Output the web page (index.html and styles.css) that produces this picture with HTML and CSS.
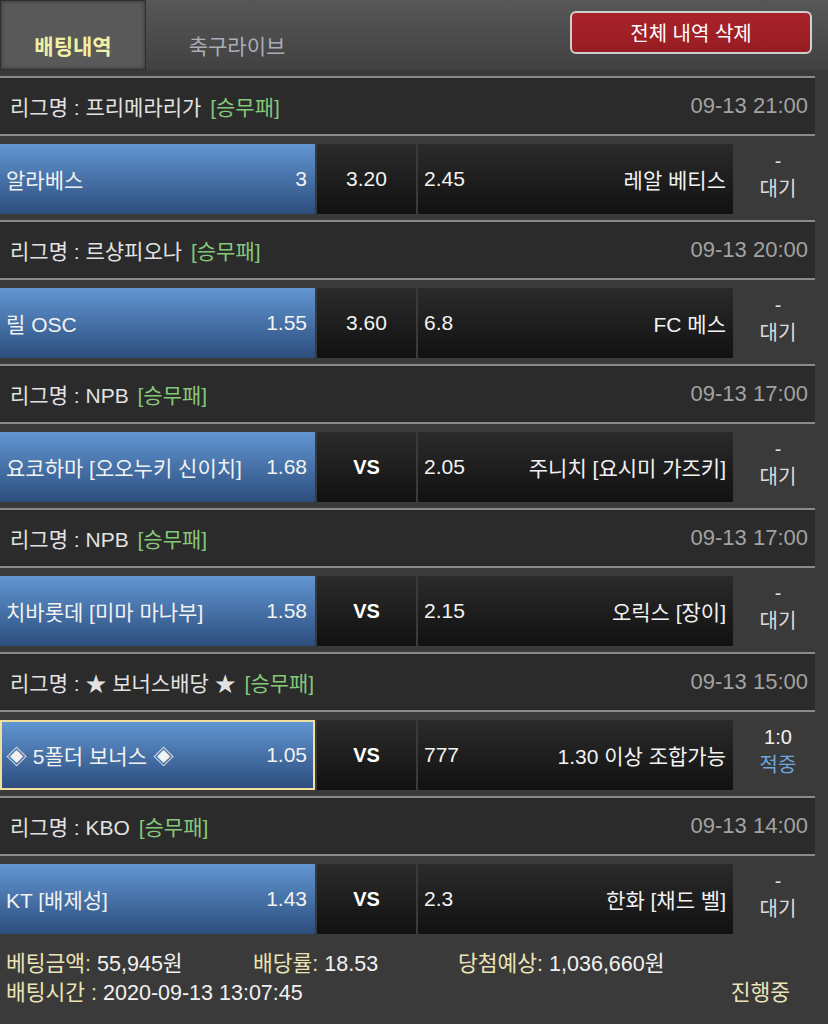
FILE: index.html
```html
<!DOCTYPE html>
<html lang="ko">
<head>
  <meta charset="UTF-8">
  <meta name="viewport" content="width=device-width, initial-scale=1.0">
  <title>배팅내역</title>
  <link rel="stylesheet" href="styles.css">
</head>
<body>
  <div class="top-bar">
    <div class="tab active">배팅내역</div>
    <div class="tab">축구라이브</div>
    <button class="btn-clear">전체 내역 삭제</button>
  </div>

  <div class="bet-list">
    <div class="bet-block">
      <div class="league">
        <span class="league-name">리그명 : 프리메라리가 <em>[승무패]</em></span>
        <span class="league-date">09-13 21:00</span>
      </div>
      <div class="match">
        <div class="cell home"><span>알라베스</span><span>3</span></div>
        <div class="cell draw">3.20</div>
        <div class="cell away"><span>2.45</span><span>레알 베티스</span></div>
        <div class="status"><span>-</span><span>대기</span></div>
      </div>
    </div>

    <div class="bet-block">
      <div class="league">
        <span class="league-name">리그명 : 르샹피오나 <em>[승무패]</em></span>
        <span class="league-date">09-13 20:00</span>
      </div>
      <div class="match">
        <div class="cell home"><span>릴 OSC</span><span>1.55</span></div>
        <div class="cell draw">3.60</div>
        <div class="cell away"><span>6.8</span><span>FC 메스</span></div>
        <div class="status"><span>-</span><span>대기</span></div>
      </div>
    </div>

    <div class="bet-block">
      <div class="league">
        <span class="league-name">리그명 : NPB <em>[승무패]</em></span>
        <span class="league-date">09-13 17:00</span>
      </div>
      <div class="match">
        <div class="cell home"><span>요코하마 [오오누키 신이치]</span><span>1.68</span></div>
        <div class="cell draw vs">VS</div>
        <div class="cell away"><span>2.05</span><span>주니치 [요시미 가즈키]</span></div>
        <div class="status"><span>-</span><span>대기</span></div>
      </div>
    </div>

    <div class="bet-block">
      <div class="league">
        <span class="league-name">리그명 : NPB <em>[승무패]</em></span>
        <span class="league-date">09-13 17:00</span>
      </div>
      <div class="match">
        <div class="cell home"><span>치바롯데 [미마 마나부]</span><span>1.58</span></div>
        <div class="cell draw vs">VS</div>
        <div class="cell away"><span>2.15</span><span>오릭스 [장이]</span></div>
        <div class="status"><span>-</span><span>대기</span></div>
      </div>
    </div>

    <div class="bet-block">
      <div class="league">
        <span class="league-name">리그명 : ★ 보너스배당 ★ <em>[승무패]</em></span>
        <span class="league-date">09-13 15:00</span>
      </div>
      <div class="match">
        <div class="cell home picked"><span>◈ 5폴더 보너스 ◈</span><span>1.05</span></div>
        <div class="cell draw vs">VS</div>
        <div class="cell away"><span>777</span><span>1.30 이상 조합가능</span></div>
        <div class="status"><span class="score">1:0</span><span class="hit">적중</span></div>
      </div>
    </div>

    <div class="bet-block">
      <div class="league">
        <span class="league-name">리그명 : KBO <em>[승무패]</em></span>
        <span class="league-date">09-13 14:00</span>
      </div>
      <div class="match">
        <div class="cell home"><span>KT [배제성]</span><span>1.43</span></div>
        <div class="cell draw vs">VS</div>
        <div class="cell away"><span>2.3</span><span>한화 [채드 벨]</span></div>
        <div class="status"><span>-</span><span>대기</span></div>
      </div>
    </div>
  </div>

  <div class="summary">
    <div class="summary-row">
      <span class="item w1"><b>베팅금액:</b> 55,945원</span>
      <span class="item w2"><b>배당률:</b> 18.53</span>
      <span class="item"><b>당첨예상:</b> 1,036,660원</span>
    </div>
    <div class="summary-row spread">
      <span class="item"><b>배팅시간 :</b> 2020-09-13 13:07:45</span>
      <span class="item state">진행중</span>
    </div>
  </div>
</body>
</html>
```

FILE: styles.css
```css
* {
  box-sizing: border-box;
  margin: 0;
  padding: 0;
}

body {
  font-family: "Liberation Sans", "Noto Sans CJK KR", sans-serif;
  background-color: #3a3a3a;
  color: #e6e6e6;
  width: 828px;
  height: 1024px;
  overflow: hidden;
}

.top-bar {
  height: 70px;
  display: flex;
  align-items: stretch;
  background: linear-gradient(to bottom, #575757 0%, #4a4a4a 60%, #404040 100%);
}

.tab {
  width: 182px;
  display: flex;
  align-items: center;
  justify-content: center;
  padding-top: 20px;
  font-size: 21px;
  color: #a9adb8;
}

.tab.active {
  width: 146px;
  background-color: #595959;
  border: 1px solid #2e2e2e;
  box-shadow: inset 0 0 4px rgba(0, 0, 0, 0.45);
  color: #f1f0a4;
  font-weight: bold;
}

.btn-clear {
  margin: 11px 16px 0 auto;
  width: 242px;
  height: 43px;
  border: 2px solid #cfcfcf;
  border-radius: 6px;
  background: linear-gradient(to bottom, #a9232b, #981c23);
  color: #fff;
  font-family: inherit;
  font-size: 20px;
}

.bet-list {
  width: 815px;
  padding-top: 6px;
}

.bet-block {
  border-top: 2px solid #8a8a8a;
}

.league {
  height: 58px;
  display: flex;
  align-items: center;
  justify-content: space-between;
  padding: 0 7px 0 10px;
  background-color: #2b2b2b;
  border-bottom: 2px solid #8a8a8a;
  font-size: 21px;
}

.league-name {
  color: #e2e2e2;
}

.league-name em {
  font-style: normal;
  color: #86c779;
  margin-left: 3px;
}

.league-date {
  color: #a2a2a2;
  font-size: 22px;
}

.match {
  height: 84px;
  display: flex;
  gap: 2px;
  padding: 8px 0 6px;
}

.cell {
  display: flex;
  align-items: center;
  justify-content: space-between;
  font-size: 21px;
  color: #f2f2f2;
}

.home {
  width: 315px;
  padding: 0 8px 0 6px;
  background: linear-gradient(to bottom, #6196d2, #2c4d7d);
}

.home.picked {
  border: 2px solid #f1df9c;
  padding: 0 6px 0 4px;
}

.draw {
  width: 99px;
  justify-content: center;
  background: linear-gradient(to bottom, #2b2b2b, #111);
}

.draw.vs {
  font-weight: bold;
  font-size: 20px;
  color: #fff;
}

.away {
  width: 315px;
  padding: 0 7px 0 6px;
  background: linear-gradient(to bottom, #2b2b2b, #111);
}

.status {
  width: 80px;
  display: flex;
  flex-direction: column;
  align-items: center;
  justify-content: center;
  line-height: 28px;
  font-size: 20px;
  color: #dcdcdc;
  padding: 0 0 8px 6px;
}

.status .score {
  color: #f2f2f2;
}

.status .hit {
  color: #6fa6df;
}

.summary {
  padding: 10px 38px 0 6px;
  font-size: 21.5px;
  line-height: 29px;
  color: #f2f2f2;
}

.summary-row {
  display: flex;
}

.summary-row.spread {
  justify-content: space-between;
}

.item b {
  font-weight: normal;
  color: #ebe4b4;
}

.w1 {
  width: 247px;
}

.w2 {
  width: 205px;
}

.state {
  color: #ebe4b4;
}
```
